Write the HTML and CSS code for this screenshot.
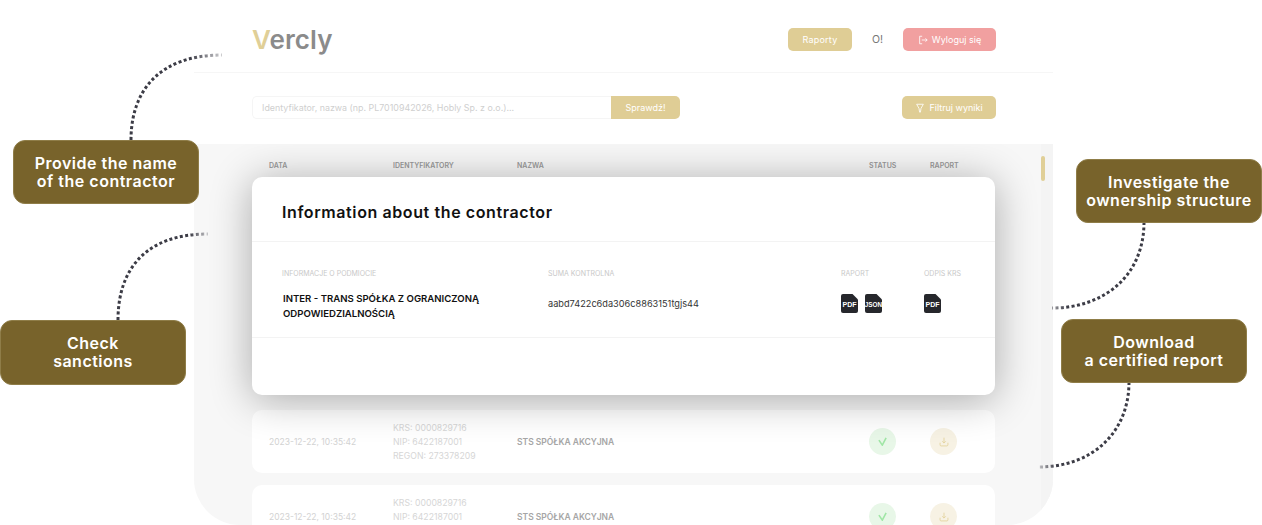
FILE: index.html
```html
<!DOCTYPE html>
<html lang="pl">
<head>
    <meta charset="UTF-8">
    <meta name="viewport" content="width=device-width, initial-scale=1.0">
    <title>Vercly</title>
    <link rel="stylesheet" href="styles.css">
</head>
<body>
    <div class="stage">
        <div class="app">
            <header class="app-header">
                <div class="logo"><span class="logo-v">V</span>ercly</div>
                <nav class="nav">
                    <button class="btn btn-gold btn-reports" type="button">Raporty</button>
                    <span class="greeting">O!</span>
                    <button class="btn btn-red btn-logout" type="button">
                        <svg class="btn-icon" viewBox="0 0 12 12" fill="none" stroke="currentColor" stroke-width="1">
                            <path d="M5 1.500H2v9h3M4.500 6h6.500M9 4l2 2-2 2"/>
                        </svg>
                        Wyloguj się
                    </button>
                </nav>
            </header>

            <div class="toolbar">
                <form class="search">
                    <input class="search-input" type="text" placeholder="Identyfikator, nazwa (np. PL7010942026, Hobly Sp. z o.o.)...">
                    <button class="btn btn-gold search-btn" type="button">Sprawdź!</button>
                </form>
                <button class="btn btn-gold btn-filter" type="button">
                    <svg class="btn-icon" viewBox="0 0 12 12" fill="none" stroke="currentColor" stroke-width="1">
                        <path d="M2 1.500h8L7.200 6.500 6.500 11h-1L4.800 6.500z"/>
                    </svg>
                    Filtruj wyniki
                </button>
            </div>

            <section class="panel">
                <div class="table-grid table-head">
                    <span>DATA</span>
                    <span>IDENTYFIKATORY</span>
                    <span>NAZWA</span>
                    <span>STATUS</span>
                    <span>RAPORT</span>
                </div>

                <div class="rows">
                    <div class="table-grid row">
                        <span class="row-date">2023-12-22, 10:35:42</span>
                        <div class="row-ids">
                            <div>KRS: 0000829716</div>
                            <div>NIP: 6422187001</div>
                            <div>REGON: 273378209</div>
                        </div>
                        <span class="row-name">STS SPÓŁKA AKCYJNA</span>
                        <span class="circle circle-green">
                            <svg class="icon-check" viewBox="0 0 10 10" fill="none" stroke="currentColor" stroke-width="1.800"><path d="M1 3.500L4.800 9 9 1"/></svg>
                        </span>
                        <span class="circle circle-gold">
                            <svg class="icon-download" viewBox="0 0 14 14" fill="none" stroke="currentColor" stroke-width="1.200"><path d="M7 1v7.500M4.500 6L7 8.500 9.500 6M1.500 8v3a1.500 1.500 0 0 0 1.500 1.500h8a1.500 1.500 0 0 0 1.500-1.500V8"/></svg>
                        </span>
                    </div>
                    <div class="table-grid row">
                        <span class="row-date">2023-12-22, 10:35:42</span>
                        <div class="row-ids">
                            <div>KRS: 0000829716</div>
                            <div>NIP: 6422187001</div>
                            <div>REGON: 273378209</div>
                        </div>
                        <span class="row-name">STS SPÓŁKA AKCYJNA</span>
                        <span class="circle circle-green">
                            <svg class="icon-check" viewBox="0 0 10 10" fill="none" stroke="currentColor" stroke-width="1.800"><path d="M1 3.500L4.800 9 9 1"/></svg>
                        </span>
                        <span class="circle circle-gold">
                            <svg class="icon-download" viewBox="0 0 14 14" fill="none" stroke="currentColor" stroke-width="1.200"><path d="M7 1v7.500M4.500 6L7 8.500 9.500 6M1.500 8v3a1.500 1.500 0 0 0 1.500 1.500h8a1.500 1.500 0 0 0 1.500-1.500V8"/></svg>
                        </span>
                    </div>
                </div>

                <div class="scrollbar"><div class="scrollbar-thumb"></div></div>

                <div class="modal">
                    <h2 class="modal-title">Information about the contractor</h2>
                    <div class="modal-body">
                        <div class="modal-grid modal-labels">
                            <span>INFORMACJE O PODMIOCIE</span>
                            <span>SUMA KONTROLNA</span>
                            <span>RAPORT</span>
                            <span>ODPIS KRS</span>
                        </div>
                        <div class="modal-grid modal-values">
                            <span class="entity-name">INTER - TRANS SPÓŁKA Z OGRANICZONĄ ODPOWIEDZIALNOŚCIĄ</span>
                            <span class="checksum">aabd7422c6da306c8863151tgjs44</span>
                            <div class="files">
                                <svg class="file" viewBox="0 0 17 19"><path d="M2 0h9.500L17 5.500V17a2 2 0 0 1-2 2H2a2 2 0 0 1-2-2V2a2 2 0 0 1 2-2z"/><text x="8.500" y="12.500">PDF</text></svg>
                                <svg class="file" viewBox="0 0 17 19"><path d="M2 0h9.500L17 5.500V17a2 2 0 0 1-2 2H2a2 2 0 0 1-2-2V2a2 2 0 0 1 2-2z"/><text class="file-small" x="8.500" y="12.500">JSON</text></svg>
                            </div>
                            <div class="files">
                                <svg class="file" viewBox="0 0 17 19"><path d="M2 0h9.500L17 5.500V17a2 2 0 0 1-2 2H2a2 2 0 0 1-2-2V2a2 2 0 0 1 2-2z"/><text x="8.500" y="12.500">PDF</text></svg>
                            </div>
                        </div>
                    </div>
                </div>
            </section>
        </div>

        <!-- kropkowane linie do dymkow -->
        <svg class="connectors" width="1262" height="525" fill="none" stroke-width="3" stroke-dasharray="3 2.400">
            <defs>
                <linearGradient id="fadeOne" gradientUnits="userSpaceOnUse" x1="190" y1="0" x2="222" y2="0">
                    <stop offset="0" stop-color="#3c3c46"/>
                    <stop offset="1" stop-color="#3c3c46" stop-opacity="0.25"/>
                </linearGradient>
                <linearGradient id="fadeTwo" gradientUnits="userSpaceOnUse" x1="190" y1="0" x2="208" y2="0">
                    <stop offset="0" stop-color="#3c3c46"/>
                    <stop offset="1" stop-color="#3c3c46" stop-opacity="0.25"/>
                </linearGradient>
                <linearGradient id="fadeThree" gradientUnits="userSpaceOnUse" x1="1066" y1="0" x2="1053" y2="0">
                    <stop offset="0" stop-color="#3c3c46"/>
                    <stop offset="1" stop-color="#3c3c46" stop-opacity="0.500"/>
                </linearGradient>
                <linearGradient id="fadeFour" gradientUnits="userSpaceOnUse" x1="1056" y1="0" x2="1038" y2="0">
                    <stop offset="0" stop-color="#3c3c46"/>
                    <stop offset="1" stop-color="#3c3c46" stop-opacity="0.25"/>
                </linearGradient>
            </defs>
            <path stroke="url(#fadeOne)" d="M131 140C131 90 160 55 222 55"/>
            <path stroke="url(#fadeTwo)" d="M118 320C118 270 145 234 208 234"/>
            <path stroke="url(#fadeThree)" d="M1144 222C1144 275 1105 308 1052 308"/>
            <path stroke="url(#fadeFour)" d="M1129 382C1129 430 1095 467 1038 467"/>
        </svg>

        <div class="callout callout-name">Provide the name<br>of the contractor</div>
        <div class="callout callout-sanctions">Check<br>sanctions</div>
        <div class="callout callout-owners">Investigate the<br>ownership structure</div>
        <div class="callout callout-report">Download<br>a certified report</div>
    </div>
</body>
</html>
```

FILE: styles.css
```css
* {
    box-sizing: border-box;
}
body {
    margin: 0;
    background-color: #ffffff;
    font-family: Inter, "Noto Sans", sans-serif;
    color: #333;
}
.stage {
    position: relative;
    width: 1262px;
    height: 525px;
    overflow: hidden;
}
.app {
    width: 859px;
    margin-left: 194px;
}
.app-header {
    display: flex;
    justify-content: space-between;
    align-items: center;
    height: 73px;
    padding: 7px 57px 0 58px;
    border-bottom: 1px solid #f6f6f6;
}
.logo {
    font-size: 26px;
    font-weight: 600;
    line-height: 30px;
    letter-spacing: 0.1px;
    color: #8b8b8b;
}
.logo-v {
    color: #e0cf97;
}
.nav {
    display: flex;
    align-items: center;
}
.btn {
    display: flex;
    align-items: center;
    justify-content: center;
    gap: 4px;
    height: 23px;
    padding: 0;
    border: none;
    border-radius: 5px;
    font-family: inherit;
    font-size: 9px;
    color: #ffffff;
}
.btn-gold {
    background-color: #dfcd95;
}
.btn-red {
    background-color: #f1a0a0;
}
.btn-icon {
    width: 10px;
    height: 10px;
}
.btn-reports {
    width: 64px;
    letter-spacing: 0.2px;
}
.btn-logout {
    width: 93px;
}
.btn-filter {
    width: 94px;
}
.greeting {
    width: 51px;
    text-align: center;
    font-size: 10.5px;
    color: #777;
}
.toolbar {
    display: flex;
    justify-content: space-between;
    align-items: center;
    height: 71px;
    padding: 0 57px 2px 58px;
}
.search {
    display: flex;
    width: 428px;
    margin: 0;
}
.search-input {
    flex: 1;
    height: 23px;
    padding: 0 9px;
    border: 1px solid #f5f5f5;
    border-right: none;
    border-radius: 5px 0 0 5px;
    font-family: inherit;
    font-size: 8.9px;
}
.search-input::placeholder {
    color: #cfcfcf;
}
.search-btn {
    width: 69px;
    border-radius: 0 5px 5px 0;
}
.panel {
    position: relative;
    height: 381px;
    padding: 0 58px;
    overflow: hidden;
    background-color: #f7f7f7;
    border-radius: 0 0 46px 46px;
}
.table-grid {
    display: grid;
    grid-template-columns: 124px 124px 352px 61px 27px;
    align-items: center;
    padding-left: 17px;
}
.table-head {
    height: 43px;
    font-size: 7px;
    font-weight: 600;
    color: #9a9a9a;
}
.rows {
    display: flex;
    flex-direction: column;
    gap: 12px;
    margin-top: 223px;
}
.row {
    height: 63px;
    background-color: #ffffff;
    border-radius: 10px;
}
.row-date {
    font-size: 8.5px;
    color: #d2d2d2;
}
.row-ids {
    font-size: 8.7px;
    line-height: 14px;
    color: #d6d6d6;
}
.row-name {
    font-size: 8.5px;
    font-weight: 600;
    color: #a6a6a6;
}
.circle {
    display: flex;
    align-items: center;
    justify-content: center;
    width: 27px;
    height: 27px;
    border-radius: 50%;
}
.icon-check {
    width: 9px;
    height: 9px;
}
.icon-download {
    width: 10px;
    height: 10px;
}
.circle-green {
    background-color: #e8f7e8;
    color: #a0e6a6;
}
.circle-gold {
    background-color: #f7f2e4;
    color: #e3d29c;
}
.scrollbar {
    position: absolute;
    top: 0;
    right: 0;
    width: 12px;
    height: 100%;
    background-color: #f4f4f4;
}
.scrollbar-thumb {
    width: 4px;
    height: 25px;
    margin-top: 12px;
    border-radius: 2px;
    background-color: #e0cf97;
}
.modal {
    position: absolute;
    top: 33px;
    left: 58px;
    width: 743px;
    height: 218px;
    background-color: #ffffff;
    border-radius: 10px;
    box-shadow: 0 4px 42px rgba(0, 0, 0, 0.32);
}
.modal-title {
    height: 65px;
    margin: 0;
    padding: 26px 30px 0;
    font-size: 16px;
    font-weight: 600;
    line-height: 19px;
    letter-spacing: 0.6px;
    color: #111;
    border-bottom: 1px solid #f3f3f3;
}
.modal-body {
    height: 96px;
    border-bottom: 1px solid #f3f3f3;
}
.modal-grid {
    display: grid;
    grid-template-columns: 266px 293px 83px 1fr;
    padding-left: 30px;
}
.modal-labels {
    padding-top: 27px;
    font-size: 7px;
    line-height: 10px;
    color: #c8c8c8;
}
.modal-values {
    align-items: center;
    padding-top: 6px;
}
.entity-name {
    padding: 6px 50px 0 1px;
    font-size: 9.6px;
    font-weight: 600;
    line-height: 15px;
    color: #111;
}
.checksum {
    font-size: 9.2px;
    color: #333;
}
.files {
    display: flex;
    gap: 7px;
}
.file {
    display: block;
    width: 17px;
    height: 19px;
}
.file path {
    fill: #26272c;
}
.file text {
    fill: #ffffff;
    font-family: "Liberation Sans", sans-serif;
    font-size: 7px;
    font-weight: 700;
    text-anchor: middle;
}
.file .file-small {
    font-size: 6.4px;
}
.connectors {
    position: absolute;
    top: 0;
    left: 0;
}
.callout {
    position: absolute;
    display: flex;
    align-items: center;
    justify-content: center;
    width: 186px;
    height: 64px;
    padding-bottom: 1px;
    background-color: #78632b;
    border: 1px solid #8f7d48;
    border-radius: 12px;
    text-align: center;
    font-size: 16px;
    font-weight: 600;
    line-height: 18px;
    letter-spacing: 0.5px;
    color: #ffffff;
}
.callout-name {
    top: 140px;
    left: 13px;
}
.callout-sanctions {
    top: 320px;
    left: 0;
    height: 65px;
}
.callout-owners {
    top: 159px;
    left: 1076px;
}
.callout-report {
    top: 319px;
    left: 1061px;
}
```
